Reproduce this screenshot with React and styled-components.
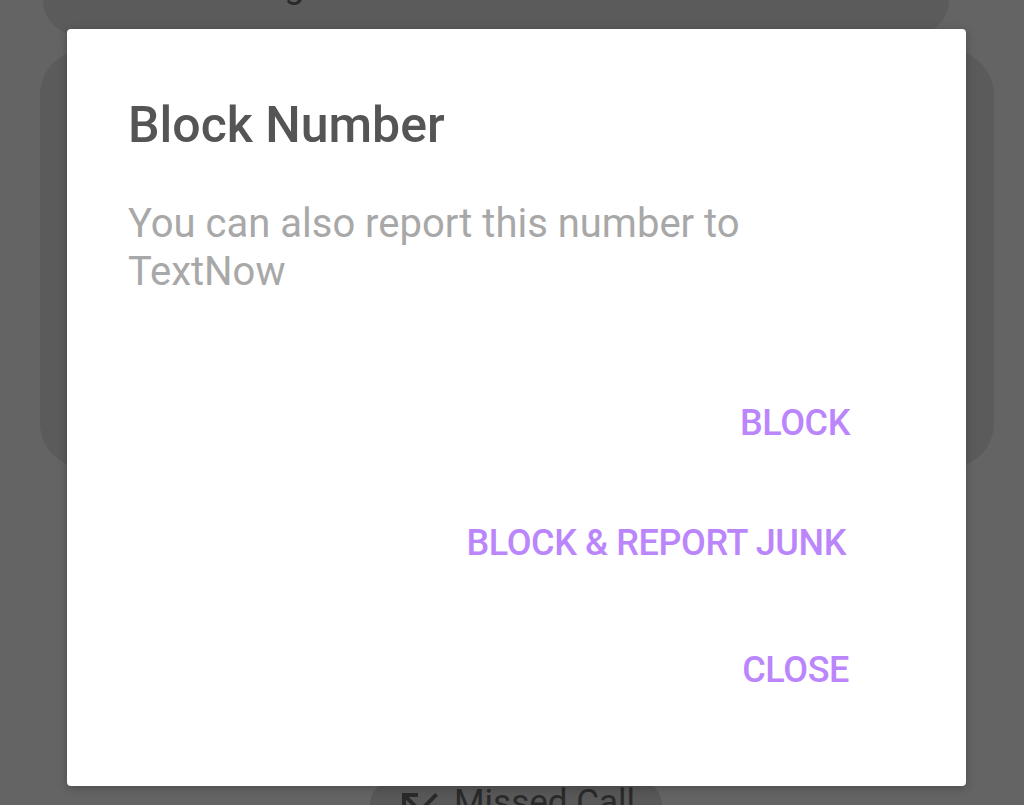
import styled, { createGlobalStyle } from 'styled-components';

const GlobalStyle = createGlobalStyle`
  html, body {
    margin: 0;
    padding: 0;
    background: #646464;
    overflow: hidden;
    font-family: Roboto, "Noto Sans", "Liberation Sans", sans-serif;
  }
`;

const Screen = styled.div`
  position: relative;
  height: 805px;
  overflow: hidden;
  display: flex;
  flex-direction: column;
  background: #646464;
`;

const TopCard = styled.div`
  box-sizing: border-box;
  height: 35px;
  margin: 0 75px 0 43px;
  padding: 0 0 32px 152px;
  display: flex;
  flex-direction: column;
  justify-content: flex-end;
  background: #5b5b5b;
  border-radius: 0 0 50px 50px;
`;

const TopLabel = styled.span`
  font-size: 36px;
  line-height: 36px;
  color: #2a2a2a;
  white-space: nowrap;
`;

const MiddleCard = styled.div`
  height: 418px;
  margin: 15px 30px 0 40px;
  background: #5b5b5b;
  border-radius: 45px;
`;

const MissedPill = styled.div`
  box-sizing: border-box;
  align-self: flex-start;
  display: flex;
  align-items: flex-start;
  gap: 10px;
  width: 292px;
  height: 50px;
  margin: auto 0 -25px 370px;
  padding: 3px 0 0 26px;
  background: #585858;
  border-radius: 28px;
`;

const MissedIcon = styled.svg`
  width: 48px;
  height: 48px;
  margin-top: -4px;
  flex: none;
  fill: #2a2a2a;
`;

const MissedText = styled.span`
  font-size: 35px;
  line-height: 40px;
  color: #2a2a2a;
`;

const Dialog = styled.div`
  position: absolute;
  left: 67px;
  top: 29px;
  box-sizing: border-box;
  width: 899px;
  height: 757px;
  padding: 66px 116px 54px 61px;
  display: flex;
  flex-direction: column;
  background: #ffffff;
  border-radius: 4px;
  box-shadow: 0 2px 10px rgba(0, 0, 0, 0.25);
`;

const Title = styled.h2`
  margin: 0;
  font-size: 50px;
  line-height: 60px;
  font-weight: 500;
  color: #555555;
`;

const Message = styled.p`
  margin: 45px 0 0;
  font-size: 40px;
  line-height: 48px;
  font-weight: 400;
  color: #a8a8a8;
`;

const Actions = styled.div`
  margin-top: 65px;
  display: flex;
  flex-direction: column;
  align-items: flex-end;
`;

const ActionButton = styled.button`
  padding: ${(props) => props.pad};
  border: none;
  background: none;
  font-family: inherit;
  font-size: 36px;
  line-height: 42px;
  font-weight: 500;
  letter-spacing: -0.4px;
  color: #bb86fc;
  cursor: pointer;
`;

const actions = [
  { label: 'BLOCK', pad: '41px 0 37px' },
  { label: 'BLOCK & REPORT JUNK', pad: '41px 4px 41px 0' },
  { label: 'CLOSE', pad: '44px 1px 41px 0' },
];

const App = () => {
  return (
    <>
      <GlobalStyle />
      <Screen>
        <TopCard>
          <TopLabel>Calling</TopLabel>
        </TopCard>
        <MiddleCard />
        <MissedPill>
          <MissedIcon viewBox="0 0 24 24">
            <path d="M19.59 7L12 14.59 6.41 9H11V7H3v8h2v-4.59l7 7 9-9z" />
          </MissedIcon>
          <MissedText>Missed Call</MissedText>
        </MissedPill>

        <Dialog>
          <Title>Block Number</Title>
          <Message>You can also report this number to TextNow</Message>
          <Actions>
            {actions.map((a) => (
              <ActionButton key={a.label} pad={a.pad}>
                {a.label}
              </ActionButton>
            ))}
          </Actions>
        </Dialog>
      </Screen>
    </>
  );
};

export default App;
